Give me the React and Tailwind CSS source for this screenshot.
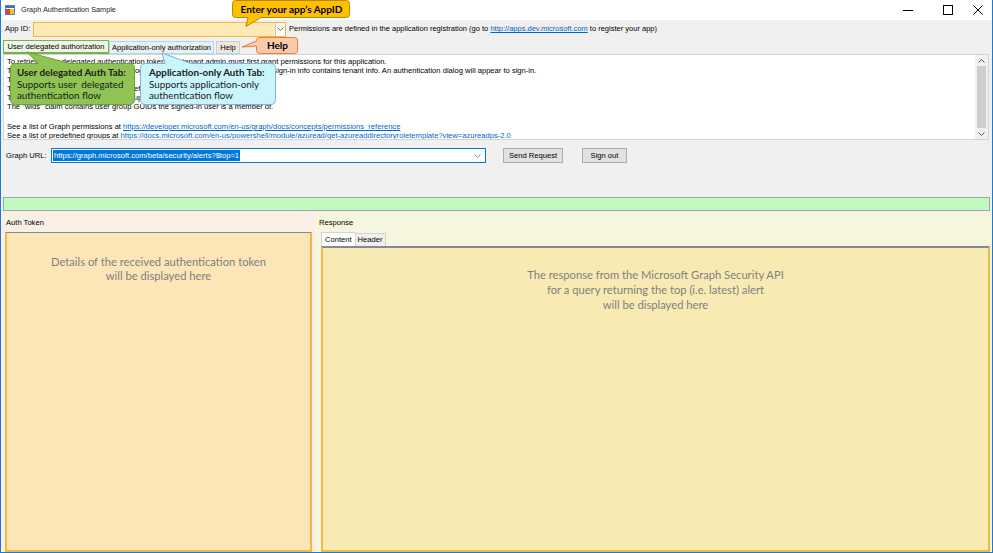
import React from "react";

const AppIcon = () => (
  <svg width="10" height="10" viewBox="0 0 10 10">
    <rect x="0.5" y="0.5" width="9" height="9" fill="#ffffff" stroke="#5a7fb8" />
    <rect x="1" y="1" width="8" height="2" fill="#3f6fc4" />
    <rect x="1" y="4" width="4" height="5" fill="#e0412f" />
    <rect x="5" y="4" width="4" height="5" fill="#f3c21b" />
  </svg>
);

const Chevron = ({ color = "#606060" }) => (
  <svg width="7" height="4" viewBox="0 0 7 4">
    <path d="M0.5 0.5 L3.5 3.5 L6.5 0.5" fill="none" stroke={color} strokeWidth="0.9" />
  </svg>
);

const Arrow = ({ up }) => (
  <svg width="7" height="4" viewBox="0 0 7 4">
    <path d={up ? "M0.5 3.5 L3.5 0.5 L6.5 3.5" : "M0.5 0.5 L3.5 3.5 L6.5 0.5"} fill="none" stroke="#606060" strokeWidth="1" />
  </svg>
);

const WindowControls = () => (
  <div className="ml-auto flex items-center h-full">
    <div className="w-[48px] h-full flex items-center justify-center">
      <svg width="10" height="10" viewBox="0 0 10 10">
        <path d="M0 5.5 H10" stroke="#000" strokeWidth="1" />
      </svg>
    </div>
    <div className="w-[32px] h-full flex items-center justify-center">
      <svg width="10" height="10" viewBox="0 0 10 10">
        <rect x="0.5" y="0.5" width="9" height="9" fill="none" stroke="#000" strokeWidth="1" />
      </svg>
    </div>
    <div className="w-[28px] h-full flex items-center justify-center">
      <svg width="10" height="10" viewBox="0 0 10 10">
        <path d="M0.5 0.5 L9.5 9.5 M9.5 0.5 L0.5 9.5" stroke="#000" strokeWidth="1" />
      </svg>
    </div>
  </div>
);

const Link = ({ children }) => <span className="text-[#0066cc] underline">{children}</span>;

const infoLines = [
  "To retrieve user-delegated authentication token, the tenant admin must first grant permissions for this application.",
  "To sign-in, the app uses the common login endpoint by default, unless the user sign-in info contains tenant info. An authentication dialog will appear to sign-in.",
  "The token contains:",
  "The \"roles\" claim contains app roles defined",
  "The \"groups\" claim lists the user's groups",
  "The \"wids\" claim contains user group GUIDs the signed-in user is a member of.",
];

export default function App() {
  return (
    <div className="relative w-[993px] h-[553px] overflow-hidden bg-[#f0f0f0] border border-t-0 border-[#1a7bd0] flex flex-col font-['Liberation_Sans',Arial,sans-serif] text-[7.6px] text-black">
      {/* Title bar */}
      <div className="h-[20px] shrink-0 bg-white flex items-center">
        <div className="ml-[4px] flex items-center">
          <AppIcon />
        </div>
        <span className="ml-[6px] text-[7.3px] text-[#1a1a1a]">Graph Authentication Sample</span>
        <WindowControls />
      </div>

      {/* App ID row */}
      <div className="mt-[1px] h-[16px] shrink-0 flex items-center pl-[4px]">
        <span className="w-[28px]">App ID:</span>
        <div className="w-[253px] h-[15px] bg-[#fde9b6] border border-[#f4b83f] flex justify-end">
          <div className="w-[10px] bg-white border-l border-[#c8c8c8] flex items-center justify-center">
            <Chevron />
          </div>
        </div>
        <span className="ml-[3px] whitespace-nowrap text-[7.5px]">
          Permissions are defined in the application registration (go to <Link>http://apps.dev.microsoft.com</Link> to register your app)
        </span>
      </div>

      {/* Tabs */}
      <div className="mt-[3px] ml-[2px] h-[14px] shrink-0 flex items-end">
        <div className="w-[106px] h-[14px] bg-[#eef5e4] border border-[#78b150] border-b-2 flex items-center justify-center whitespace-nowrap">
          User delegated authorization
        </div>
        <div className="w-[105px] h-[13px] bg-[#eaf1f3] border border-[#a6dced] flex items-center justify-center whitespace-nowrap">
          Application-only authorization
        </div>
        <div className="ml-[2px] w-[24px] h-[13px] bg-[#f6e3da] border border-[#a6dced] flex items-center justify-center">
          Help
        </div>
      </div>

      {/* Info text box */}
      <div className="ml-[2px] mr-[3px] h-[86px] shrink-0 bg-white border border-[#d4d4d4] flex">
        <div className="flex-1 pl-[3px] pt-[2px] leading-[9px] whitespace-nowrap overflow-hidden">
          {infoLines.map((l, i) => (
            <div key={i} className="h-[9px]">{l}</div>
          ))}
          <div className="h-[11px]" />
          <div className="h-[9px]">
            See a list of Graph permissions at <Link>https://developer.microsoft.com/en-us/graph/docs/concepts/permissions_reference</Link>
          </div>
          <div className="h-[9px]">
            See a list of predefined groups at <Link>https://docs.microsoft.com/en-us/powershell/module/azuread/get-azureaddirectoryroletemplate?view=azureadps-2.0</Link>
          </div>
        </div>
        <div className="w-[13px] bg-[#f0f0f0] flex flex-col items-center">
          <div className="h-[11px] flex items-center justify-center">
            <Arrow up />
          </div>
          <div className="flex-1 w-[9px] bg-[#cdcdcd]" />
          <div className="h-[11px] flex items-center justify-center">
            <Arrow />
          </div>
        </div>
      </div>

      {/* Graph URL row */}
      <div className="mt-[8px] h-[15px] shrink-0 flex items-center pl-[5px]">
        <span className="w-[45px]">Graph URL:</span>
        <div className="w-[435px] h-[15px] bg-white border border-[#0078d7] flex items-center pl-[1px] pr-[4px]">
          <span className="bg-[#0078d7] text-white leading-[11px] px-[1px] whitespace-nowrap">https://graph.microsoft.com/beta/security/alerts?$top=1</span>
          <div className="ml-auto flex items-center">
            <Chevron color="#808080" />
          </div>
        </div>
        <button className="ml-[17px] w-[60px] h-[15px] bg-[#e1e1e1] border border-[#adadad] flex items-center justify-center">
          Send Request
        </button>
        <button className="ml-[19px] w-[45px] h-[15px] bg-[#e1e1e1] border border-[#adadad] flex items-center justify-center">
          Sign out
        </button>
      </div>

      {/* Status bar */}
      <div className="mt-[34px] ml-[2px] mr-[2px] h-[14px] shrink-0 bg-[#c1f9c1] border border-[#a5a5a5]" />

      {/* Panels */}
      <div className="mt-[1px] flex-1 flex min-h-0">
        {/* Auth token */}
        <div className="w-[314px] bg-[#faefe4] flex flex-col pl-[4px] pr-[3px]">
          <div className="h-[20px] flex items-end pl-[1px] pb-[4px]">Auth Token</div>
          <div className="flex-1 bg-[#fce6b8] border-2 border-[#f6b940] border-t-[#7f8a9a] border-t pt-[22px] text-center text-[11.2px] leading-[14px] text-[#7f7f7f] font-['Lato','Open_Sans',sans-serif]">
            <div>Details of the received authentication token</div>
            <div>will be displayed here</div>
          </div>
        </div>

        {/* Response */}
        <div className="flex-1 bg-[#f6f5dd] flex flex-col pl-[6px] pr-[2px]">
          <div className="h-[20px] flex items-end pb-[4px] -ml-[2px]">Response</div>
          <div className="h-[14px] flex items-end">
            <div className="h-[14px] px-[3px] bg-white border border-b-0 border-[#d4d4d4] flex items-center">Content</div>
            <div className="h-[13px] px-[2px] bg-[#f0f0f0] border border-b-0 border-l-0 border-[#d4d4d4] flex items-center">Header</div>
          </div>
          <div className="flex-1 bg-[#f7ebb3] border-2 border-[#f6b940] border-t-[#7f8a9a] pt-[19px] text-center text-[11.2px] leading-[15px] text-[#7f7f7f] font-['Lato','Open_Sans',sans-serif]">
            <div>The response from the Microsoft Graph Security API</div>
            <div>for a query returning the top (i.e. latest) alert</div>
            <div>will be displayed here</div>
          </div>
        </div>
      </div>

      {/* Callout: App ID */}
      <div className="absolute left-[229px] top-0 w-[122px] h-[28px]">
        <svg width="122" height="28" viewBox="0 0 122 28" className="absolute inset-0">
          <path d="M5.5 0.5 H116.5 Q119.5 0.5 119.5 3.5 V14.5 Q119.5 17.5 116.5 17.5 H31 L16 26.5 L18 17.5 H5.5 Q2.5 17.5 2.5 14.5 V3.5 Q2.5 0.5 5.5 0.5 Z" fill="#ffc000" stroke="#b8860b" strokeWidth="1" />
        </svg>
        <div className="absolute left-[3px] top-0 w-[117px] h-[18px] flex items-center justify-center font-['Lato','Open_Sans',sans-serif] font-bold text-[10px] text-black">
          Enter your app’s AppID
        </div>
      </div>

      {/* Callout: Help */}
      <div className="absolute left-[239px] top-[35px] w-[60px] h-[21px]">
        <svg width="60" height="21" viewBox="0 0 60 21" className="absolute inset-0">
          <path d="M19.5 2.5 H54.5 Q57.5 2.5 57.5 5.5 V15.5 Q57.5 18.5 54.5 18.5 H19.5 Q16.5 18.5 16.5 15.5 V11 L2 12 L16.5 6 V5.5 Q16.5 2.5 19.5 2.5 Z" fill="#f8cbad" stroke="#ed7d31" strokeWidth="1" />
        </svg>
        <div className="absolute left-[17px] top-[2px] w-[41px] h-[17px] flex items-center justify-center font-['Lato','Open_Sans',sans-serif] font-bold text-[10px] text-black">
          Help
        </div>
      </div>

      {/* Callout: user delegated */}
      <div className="absolute left-[7px] top-[50px] w-[130px] h-[56px]">
        <svg width="130" height="56" viewBox="0 0 130 56" className="absolute inset-0">
          <path d="M6.5 13.5 H30 L19 2 L62 13.5 H121.5 Q126.5 13.5 126.5 18.5 V49.5 Q126.5 54.5 121.5 54.5 H7.5 Q2.5 54.5 2.5 49.5 V18.5 Q2.5 13.5 7.5 13.5 Z" fill="#8fc353" stroke="#6e9f3c" strokeWidth="1" />
        </svg>
        <div className="absolute left-[9px] top-[17px] font-['Lato','Open_Sans',sans-serif] text-[9.8px] leading-[11.5px] text-[#1a1a1a] whitespace-nowrap">
          <div className="font-bold">User delegated Auth Tab:</div>
          <div>Supports user&nbsp; delegated</div>
          <div>authentication flow</div>
        </div>
      </div>

      {/* Callout: app-only */}
      <div className="absolute left-[137px] top-[50px] w-[142px] h-[56px]">
        <svg width="142" height="56" viewBox="0 0 142 56" className="absolute inset-0">
          <path d="M7.5 13.5 H27 L24 3 L53 13.5 H132.5 Q137.5 13.5 137.5 18.5 V49.5 Q137.5 54.5 132.5 54.5 H7.5 Q2.5 54.5 2.5 49.5 V18.5 Q2.5 13.5 7.5 13.5 Z" fill="#c9f5fb" stroke="#7fb2e0" strokeWidth="1" />
        </svg>
        <div className="absolute left-[11px] top-[17px] font-['Lato','Open_Sans',sans-serif] text-[9.8px] leading-[11.5px] text-[#1a1a1a] whitespace-nowrap">
          <div className="font-bold">Application-only Auth Tab:</div>
          <div>Supports application-only</div>
          <div>authentication flow</div>
        </div>
      </div>
    </div>
  );
}
